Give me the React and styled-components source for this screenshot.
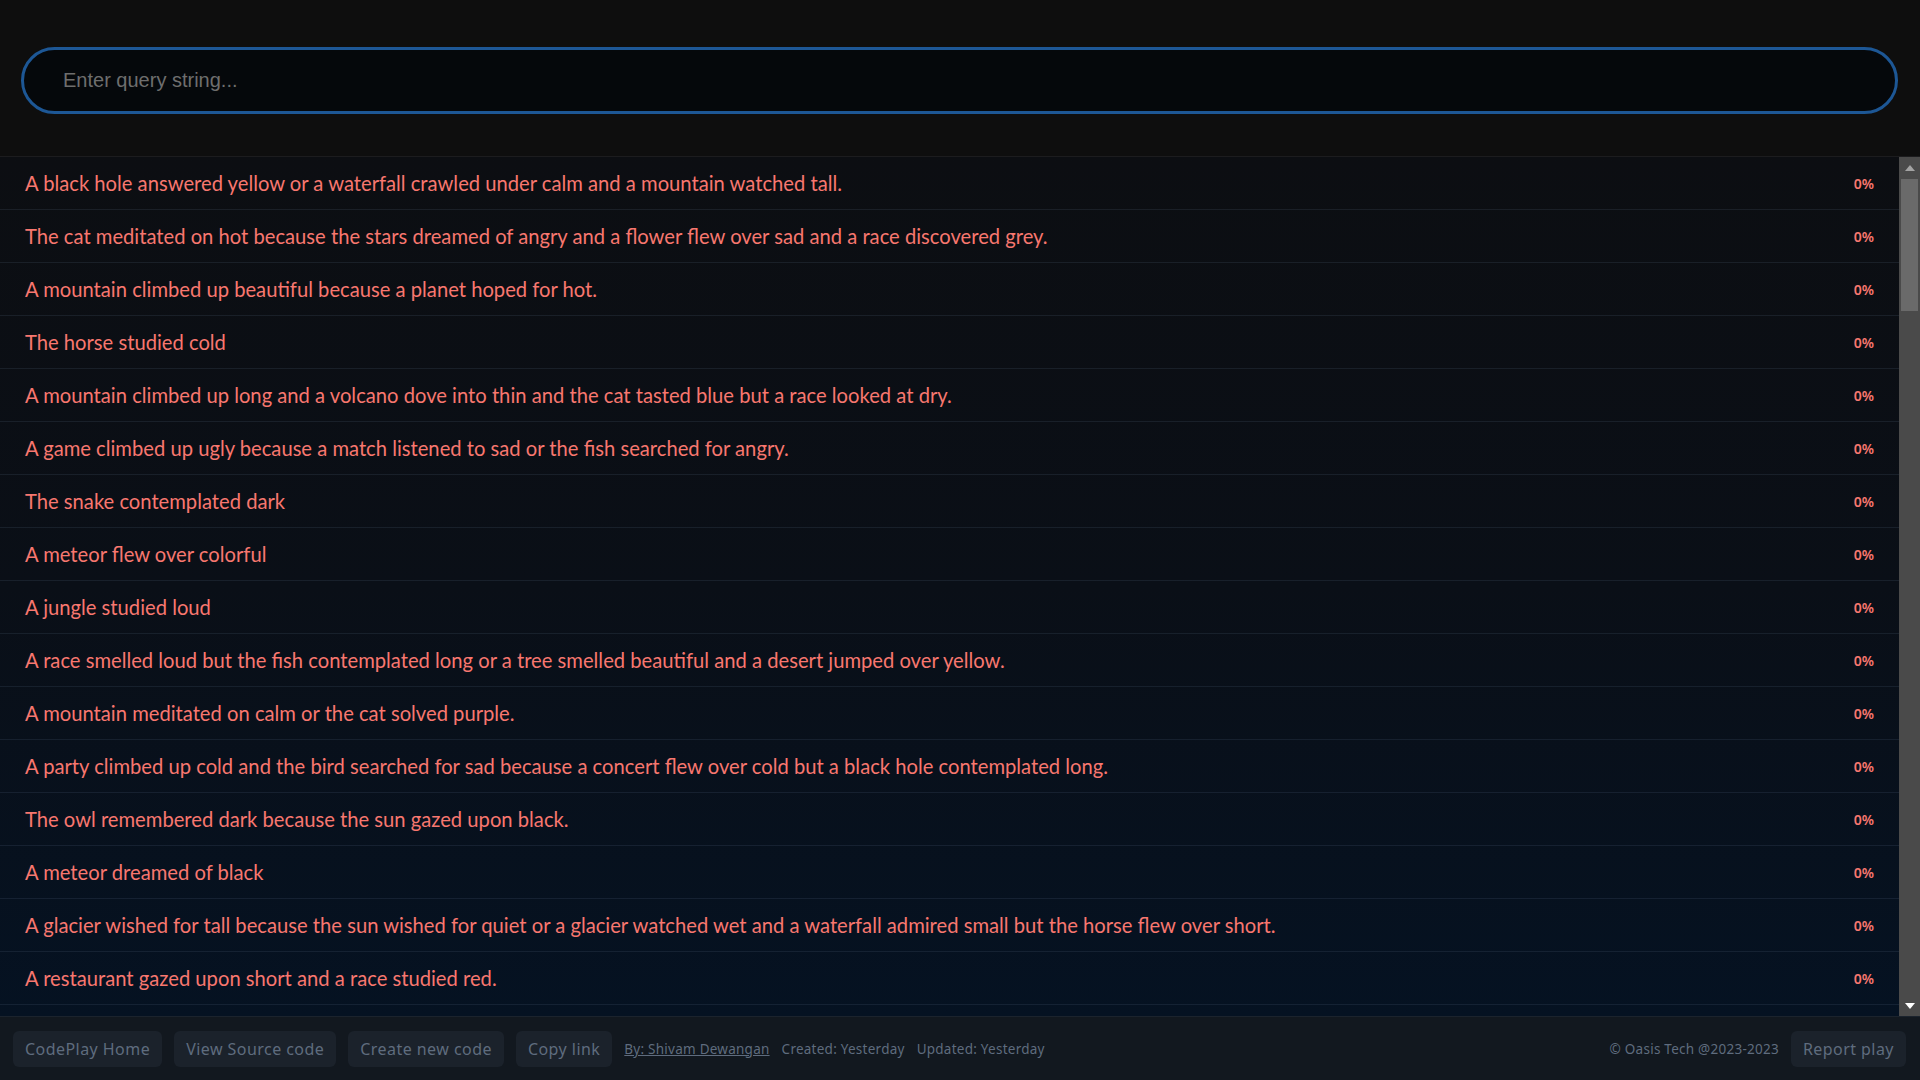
import React, { useEffect, useRef, useState } from "react";
import styled, { createGlobalStyle } from "styled-components";

const Global = createGlobalStyle`
  html, body { margin: 0; padding: 0; height: 100%; background: #0e0e0e; }
  #root { height: 100%; }
  * { box-sizing: border-box; }
`;

const Page = styled.div`
  height: 100vh;
  display: flex;
  flex-direction: column;
  background: #0e0e0e;
  overflow: hidden;
`;

const Header = styled.header`
  flex: 0 0 auto;
  padding: 47px 22px 42px 21px;
  border-bottom: 1px solid #1c1c1e;
  background: #0e0e0e;
`;

const Search = styled.input`
  display: block;
  width: 100%;
  height: 67px;
  border: 3px solid #1d5795;
  border-radius: 999px;
  background: #05080b;
  padding: 0 39px;
  font-family: "Liberation Sans", Arial, sans-serif;
  font-size: 20px;
  color: #ddd;
  outline: none;
  &::placeholder { color: #6e6e6e; }
`;

const ListFrame = styled.section`
  flex: 1 1 auto;
  min-height: 0;
  display: flex;
  background: linear-gradient(to bottom, #0c0e12 0%, #0a0f17 50%, #051222 100%);
`;

const ScrollArea = styled.main`
  flex: 1 1 auto;
  min-width: 0;
  overflow-y: auto;
  scrollbar-width: none;
  &::-webkit-scrollbar { display: none; }
`;

const Rail = styled.div`
  flex: 0 0 21px;
  display: flex;
  flex-direction: column;
  background: #4a4a4a;
`;

const RailButton = styled.div`
  flex: 0 0 21px;
  display: flex;
  align-items: center;
  justify-content: center;
`;

const Track = styled.div`
  flex: 1 1 auto;
  padding: 1px 2px;
`;

const Thumb = styled.div`
  width: 100%;
  background: #6a6a6a;
`;

const Row = styled.div`
  height: 53px;
  display: flex;
  align-items: center;
  justify-content: space-between;
  padding: 0 25px 0 25px;
  border-bottom: 1px solid rgba(120, 145, 175, 0.13);
`;

const Sentence = styled.span`
  font-family: Lato, "Noto Sans", sans-serif;
  font-size: 20.2px;
  color: #f8776f;
  white-space: nowrap;
`;

const Percent = styled.span`
  font-family: "Noto Sans", sans-serif;
  font-size: 14px;
  font-weight: 600;
  color: #f8776f;
`;

const Footer = styled.footer`
  flex: 0 0 64px;
  display: flex;
  align-items: center;
  gap: 12px;
  padding: 0 14px 0 13px;
  background: #12181f;
  border-top: 1px solid #1b232d;
  font-family: "Noto Sans", sans-serif;
  color: #5f6c7e;
`;

const Btn = styled.button`
  height: 36px;
  padding: 0 12px;
  border: none;
  border-radius: 6px;
  background: #1b222b;
  color: #5f6c7e;
  font-family: "Noto Sans", sans-serif;
  font-size: 16px;
  letter-spacing: 0.45px;
  white-space: nowrap;
  cursor: pointer;
`;

const Meta = styled.span`
  font-size: 13.5px;
  letter-spacing: 0.25px;
  color: #5f6c7e;
  white-space: nowrap;
`;

const Author = styled.a`
  font-size: 13.5px;
  letter-spacing: 0.25px;
  color: #5f6c7e;
  text-decoration: underline;
  white-space: nowrap;
`;

const Spacer = styled.div`
  flex: 1;
`;

const Arrow = ({ up, color }) => (
  <svg width="10" height="6" viewBox="0 0 10 6">
    <path d={up ? "M0 6h10L5 0z" : "M0 0h10L5 6z"} fill={color} />
  </svg>
);

const base = [
  "A black hole answered yellow or a waterfall crawled under calm and a mountain watched tall.",
  "The cat meditated on hot because the stars dreamed of angry and a flower flew over sad and a race discovered grey.",
  "A mountain climbed up beautiful because a planet hoped for hot.",
  "The horse studied cold",
  "A mountain climbed up long and a volcano dove into thin and the cat tasted blue but a race looked at dry.",
  "A game climbed up ugly because a match listened to sad or the fish searched for angry.",
  "The snake contemplated dark",
  "A meteor flew over colorful",
  "A jungle studied loud",
  "A race smelled loud but the fish contemplated long or a tree smelled beautiful and a desert jumped over yellow.",
  "A mountain meditated on calm or the cat solved purple.",
  "A party climbed up cold and the bird searched for sad because a concert flew over cold but a black hole contemplated long.",
  "The owl remembered dark because the sun gazed upon black.",
  "A meteor dreamed of black",
  "A glacier wished for tall because the sun wished for quiet or a glacier watched wet and a waterfall admired small but the horse flew over short.",
  "A restaurant gazed upon short and a race studied red.",
];

const subjects = ["A river", "The moon", "A dragon", "The fox", "A city", "The ocean", "A robot", "The wind", "A castle", "The tiger", "A comet", "The forest"];
const verbs = ["danced with", "sang about", "dreamed of", "looked at", "jumped over", "wished for", "tasted", "studied", "remembered", "gazed upon"];
const adjs = ["green", "soft", "bright", "heavy", "silent", "warm", "old", "fast", "tiny", "strange", "blue", "cold"];

const extra = Array.from({ length: 84 }, (_, i) => {
  const s = subjects[(i * 7) % subjects.length];
  const v = verbs[(i * 3) % verbs.length];
  const a = adjs[(i * 5) % adjs.length];
  if (i % 3 === 0) return `${s} ${v} ${a}`;
  const s2 = subjects[(i * 5 + 2) % subjects.length].toLowerCase();
  const v2 = verbs[(i * 7 + 1) % verbs.length];
  const a2 = adjs[(i * 11 + 3) % adjs.length];
  return `${s} ${v} ${a} because ${s2} ${v2} ${a2}.`;
});

const rows = [...base, ...extra];

export default function App() {
  const areaRef = useRef(null);
  const [thumb, setThumb] = useState({ top: 0, height: 133 });

  const update = () => {
    const el = areaRef.current;
    if (!el) return;
    const track = el.clientHeight - 42 - 2;
    const ratio = el.clientHeight / el.scrollHeight;
    const height = Math.max(20, Math.round(track * ratio));
    const max = el.scrollHeight - el.clientHeight;
    const top = max > 0 ? Math.round((el.scrollTop / max) * (track - height)) : 0;
    setThumb({ top, height });
  };

  useEffect(() => {
    update();
    window.addEventListener("resize", update);
    return () => window.removeEventListener("resize", update);
  }, []);

  return (
    <Page>
      <Global />
      <Header>
        <Search placeholder="Enter query string..." />
      </Header>
      <ListFrame>
        <ScrollArea ref={areaRef} onScroll={update}>
          {rows.map((t, i) => (
            <Row key={i}>
              <Sentence>{t}</Sentence>
              <Percent>0%</Percent>
            </Row>
          ))}
        </ScrollArea>
        <Rail>
          <RailButton>
            <Arrow up color="#a3a3a3" />
          </RailButton>
          <Track>
            <Thumb style={{ marginTop: thumb.top, height: thumb.height }} />
          </Track>
          <RailButton>
            <Arrow color="#ffffff" />
          </RailButton>
        </Rail>
      </ListFrame>
      <Footer>
        <Btn>CodePlay Home</Btn>
        <Btn>View Source code</Btn>
        <Btn>Create new code</Btn>
        <Btn>Copy link</Btn>
        <Author href="#">By: Shivam Dewangan</Author>
        <Meta>Created: Yesterday</Meta>
        <Meta>Updated: Yesterday</Meta>
        <Spacer />
        <Meta>© Oasis Tech @2023-2023</Meta>
        <Btn>Report play</Btn>
      </Footer>
    </Page>
  );
}
